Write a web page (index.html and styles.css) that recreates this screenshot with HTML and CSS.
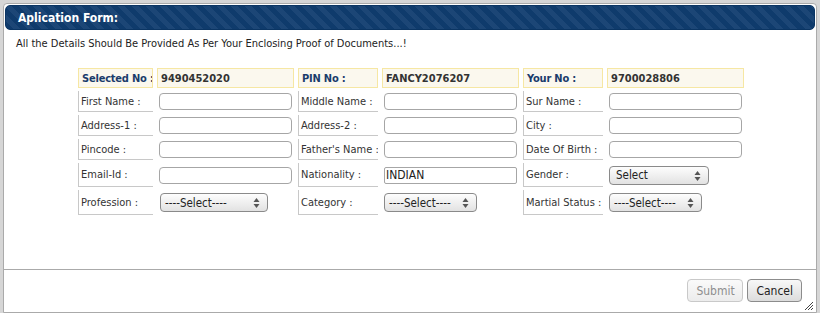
FILE: index.html
```html
<!DOCTYPE html>
<html>
<head>
<meta charset="utf-8">
<link rel="stylesheet" href="styles.css">
</head>
<body>
<div class="dialog">
  <div class="titlebar"><span class="title">Aplication Form:</span></div>
  <div class="content">
    <p class="note">All the Details Should Be Provided As Per Your Enclosing Proof of Documents...!</p>
    <div class="form">
      <div class="hcell hlabel">Selected No :</div>
      <div class="hcell hval">9490452020</div>
      <div class="hcell hlabel">PIN No :</div>
      <div class="hcell hval">FANCY2076207</div>
      <div class="hcell hlabel">Your No :</div>
      <div class="hcell hval">9700028806</div>

      <div class="label">First Name :</div>
      <div class="val"><input class="txt" type="text"></div>
      <div class="label">Middle Name :</div>
      <div class="val"><input class="txt" type="text"></div>
      <div class="label">Sur Name :</div>
      <div class="val"><input class="txt" type="text"></div>

      <div class="label">Address-1 :</div>
      <div class="val"><input class="txt" type="text"></div>
      <div class="label">Address-2 :</div>
      <div class="val"><input class="txt" type="text"></div>
      <div class="label">City :</div>
      <div class="val"><input class="txt" type="text"></div>

      <div class="label">Pincode :</div>
      <div class="val"><input class="txt" type="text"></div>
      <div class="label">Father's Name :</div>
      <div class="val"><input class="txt" type="text"></div>
      <div class="label">Date Of Birth :</div>
      <div class="val"><input class="txt" type="text"></div>

      <div class="label">Email-Id :</div>
      <div class="val"><input class="txt" type="text"></div>
      <div class="label">Nationality :</div>
      <div class="val"><input class="txt flat" type="text" value="INDIAN"></div>
      <div class="label">Gender :</div>
      <div class="val"><span class="sel w100"><span class="seltext">Select</span><svg class="arrows" width="7" height="12" viewBox="0 0 7 12"><path d="M3.5 1 L6.5 5 L0.5 5 Z" fill="#555"/><path d="M3.5 11 L6.5 7 L0.5 7 Z" fill="#555"/></svg></span></div>

      <div class="label">Profession :</div>
      <div class="val"><span class="sel w108 dash"><span class="seltext">----Select----</span><svg class="arrows" width="7" height="12" viewBox="0 0 7 12"><path d="M3.5 1 L6.5 5 L0.5 5 Z" fill="#555"/><path d="M3.5 11 L6.5 7 L0.5 7 Z" fill="#555"/></svg></span></div>
      <div class="label">Category :</div>
      <div class="val"><span class="sel w93 dash"><span class="seltext">----Select----</span><svg class="arrows" width="7" height="12" viewBox="0 0 7 12"><path d="M3.5 1 L6.5 5 L0.5 5 Z" fill="#555"/><path d="M3.5 11 L6.5 7 L0.5 7 Z" fill="#555"/></svg></span></div>
      <div class="label">Martial Status :</div>
      <div class="val"><span class="sel w93 dash"><span class="seltext">----Select----</span><svg class="arrows" width="7" height="12" viewBox="0 0 7 12"><path d="M3.5 1 L6.5 5 L0.5 5 Z" fill="#555"/><path d="M3.5 11 L6.5 7 L0.5 7 Z" fill="#555"/></svg></span></div>
    </div>
  </div>
  <div class="buttonpane">
    <button class="btn disabled" type="button">Submit</button>
    <button class="btn" type="button">Cancel</button>
  </div>
  <svg class="grip" width="10" height="10" viewBox="0 0 10 10"><path d="M9 1 L1 9 M9 4 L4 9 M9 7 L7 9" stroke="#444" stroke-width="1"/></svg>
</div>
</body>
</html>
```

FILE: styles.css
```css
html, body {
  margin: 0;
  padding: 0;
}
body {
  background: #d6d6d6;
  width: 820px;
  height: 313px;
  overflow: hidden;
  font-family: "DejaVu Sans Condensed", "DejaVu Sans", sans-serif;
  font-size: 11px;
  color: #222;
}
.dialog {
  position: relative;
  box-sizing: border-box;
  margin: 3px 0 0 3px;
  width: 814px;
  height: 310px;
  background: #fff;
  border: 1px solid #aaa;
  border-radius: 4px 4px 0 0;
  padding: 1px;
  display: flex;
  flex-direction: column;
}
.titlebar {
  height: 25px;
  box-sizing: border-box;
  border: 1px solid #0b3563;
  border-radius: 5px;
  background: repeating-linear-gradient(45deg, #0f3b6c 0 5px, #1c4676 5px 10px);
  display: flex;
  align-items: center;
  padding-left: 12px;
}
.title {
  color: #fff;
  font-weight: bold;
  font-size: 12px;
}
.content {
  flex: 1;
  padding: 0 0 0 11px;
}
.note {
  margin: 7px 0 0 0;
  height: 14px;
  line-height: 14px;
  font-size: 11px;
  color: #222;
}
.form {
  margin: 17px 0 0 62px;
  display: grid;
  grid-template-columns: 75px 137px 80px 137px 80px 137px;
  grid-template-rows: 20px 21px 21px 21px 24px 25px;
  column-gap: 4px;
  row-gap: 3px;
  white-space: nowrap;
}
.hcell {
  box-sizing: border-box;
  background: #fbf8ee;
  border: 1px solid #f6e7a3;
  font-weight: bold;
  display: flex;
  align-items: center;
  padding-left: 3px;
  overflow: hidden;
}
.hlabel { color: #1a3c6b; letter-spacing: -0.2px; }
.hval { color: #333; }
.label {
  border-left: 1px solid #c8c8c8;
  border-bottom: 1px solid #c8c8c8;
  display: flex;
  align-items: center;
  padding-left: 2px;
  color: #333;
  overflow: hidden;
}
.val {
  display: flex;
  align-items: center;
  padding-left: 2px;
}
.txt {
  box-sizing: border-box;
  width: 133px;
  height: 17px;
  border: 1px solid #a6a6a6;
  border-radius: 4px;
  background: #fff;
  padding: 0 2px;
  font-family: inherit;
  font-size: 12px;
  color: #222;
  outline: none;
}
.txt.flat {
  border-radius: 2px;
  padding: 0 1px;
}
.sel {
  position: relative;
  box-sizing: border-box;
  height: 19px;
  border: 1px solid #8a8a8a;
  border-radius: 4px;
  background: linear-gradient(#fdfdfd, #e2e2e2);
  display: flex;
  align-items: center;
  font-size: 11.5px;
  color: #222;
}
.sel .seltext { padding-left: 6px; }
.sel.dash .seltext { padding-left: 4px; }
.w100 { width: 100px; }
.w108 { width: 108px; margin-left: 1px; }
.w93 { width: 93px; }
.arrows {
  position: absolute;
  right: 7px;
  top: 3px;
}
.buttonpane {
  border-top: 1px solid #aaa;
  height: 41px;
  display: flex;
  justify-content: flex-end;
  align-items: center;
  gap: 4px;
  padding-right: 14px;
  margin: 0 -1px;
}
.btn {
  box-sizing: border-box;
  height: 23px;
  padding: 0 8px;
  border: 1px solid #8c8c8c;
  border-radius: 4px;
  background: linear-gradient(#f8f8f8, #dcdcdc);
  font-family: inherit;
  font-size: 12px;
  color: #222;
}
.btn.disabled {
  border-color: #c9c9c9;
  background: linear-gradient(#fafafa, #ececec);
  color: #8e8e8e;
  width: 56px;
}
.grip {
  position: absolute;
  right: 2px;
  bottom: 1px;
}
```
